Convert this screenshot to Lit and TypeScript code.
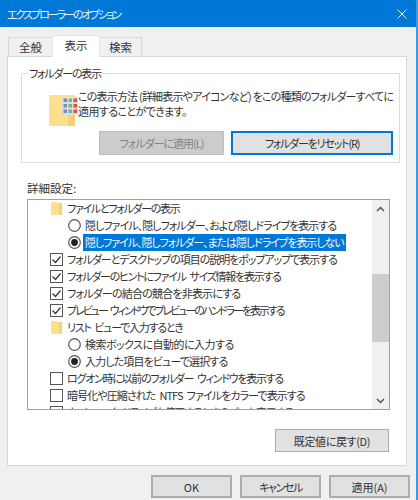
import { LitElement, html, css, svg } from "lit";
import { customElement } from "lit/decorators.js";

type Row = { kind: "folder" | "radio" | "check"; on?: boolean; sel?: boolean; text: string; ls: number };
const rows: Row[] = [
  { kind: "folder", ls: -1.3, text: "ファイルとフォルダーの表示" },
  { kind: "radio", ls: -0.96, text: "隠しファイル、隠しフォルダー、および隠しドライブを表示する" },
  { kind: "radio", ls: -1.07, on: true, sel: true, text: "隠しファイル、隠しフォルダー、または隠しドライブを表示しない" },
  { kind: "check", ls: -1.06, on: true, text: "フォルダーとデスクトップの項目の説明をポップアップで表示する" },
  { kind: "check", ls: -1.26, on: true, text: "フォルダーのヒントにファイル サイズ情報を表示する" },
  { kind: "check", ls: -0.8, on: true, text: "フォルダーの結合の競合を非表示にする" },
  { kind: "check", ls: -2.05, on: true, text: "プレビュー ウィンドウでプレビューのハンドラーを表示する" },
  { kind: "folder", ls: -1.25, text: "リスト ビューで入力するとき" },
  { kind: "radio", ls: -0.53, text: "検索ボックスに自動的に入力する" },
  { kind: "radio", ls: -0.87, on: true, text: "入力した項目をビューで選択する" },
  { kind: "check", ls: -1.26, text: "ログオン時に以前のフォルダー ウィンドウを表示する" },
  { kind: "check", ls: -0.92, text: "暗号化や圧縮された NTFS ファイルをカラーで表示する" },
  { kind: "check", ls: -1.1, text: "ネットワーク ドライブを使用するときのパスを表示する" },
];

const cols = ["#6f8fb8", "#7fb27f", "#d0534a"];

@customElement("app-root")
export class AppRoot extends LitElement {
  static styles = css`
    :host {
      display: block;
      width: 418px;
      height: 500px;
      overflow: hidden;
      background: #fff;
      font-family: "Noto Sans CJK JP", "Noto Sans", sans-serif;
      font-size: 11.5px;
      font-feature-settings: "palt";
      color: #333;
    }
    .outer { display: flex; height: 500px; }
    .line { width: 2px; background: #3d9be6; flex: none; }
    .win { width: 416px; height: 500px; flex: none; background: #f0f0f0; display: flex; flex-direction: column; }
    .title {
      height: 27px; flex: none; background: #0078d7; color: #e8f3fc;
      display: flex; align-items: center; justify-content: space-between;
      padding: 0 9px 0 7px; font-size: 11px; letter-spacing: -2px;
    }
    .x { width: 10px; height: 10px; display: block; }
    .tabs { display: flex; height: 29px; flex: none; padding-left: 8px; box-sizing: border-box; align-items: flex-end; }
    .tab {
      height: 19px; box-sizing: border-box; border: 1px solid #d9d9d9; border-bottom: none; background: #f0f0f0;
      display: flex; align-items: center; justify-content: center;
    }
    .tab.a { width: 44px; border-right: none; }
    .tab.b { width: 48px; height: 22px; background: #fff; padding-bottom: 4px; margin-bottom: -1px; position: relative; z-index: 1; border-color: #e4e4e4; }
    .tab.c { width: 42px; border-left: none; }
    .page {
      margin-left: 7px; width: 400px; height: 410px; flex: none; box-sizing: border-box; background: #fff;
      border: 1px solid #d9d9d9; padding: 8px 6px 0 13px; display: flex; flex-direction: column;
    }
    fieldset {
      margin: 0; padding: 0; border: 1px solid #dcdcdc; height: 98px; box-sizing: border-box;
      width: 379px; flex: none; min-width: 0;
    }
    legend { padding: 0 1px; margin-left: 6px; line-height: 16px; height: 16px; font-size: 11px; letter-spacing: -1.2px; }
    .gi { display: flex; height: 42px; margin-top: 8px; }
    .gi svg { flex: none; margin: 6px 0 0 27px; }
    .msg { line-height: 15px; white-space: nowrap; font-size: 11px; display: flex; flex-direction: column; }
    .m1 { letter-spacing: -0.8px; }
    .m2 { letter-spacing: -0.6px; }
    .btns { display: flex; gap: 7px; padding-left: 77px; }
    button {
      font: inherit; font-feature-settings: inherit; color: #333; background: #e1e1e1; border: 1px solid #adadad;
      padding: 0; margin: 0; box-sizing: border-box; display: block;
    }
    .btns button { height: 24px; font-size: 11px; }
    .btns .dis { width: 125px; background: #ccc; border-color: #bfbfbf; color: #838383; letter-spacing: -1px; }
    .btns .foc { width: 162px; border: 2px solid #0078d7; letter-spacing: -1.2px; }
    .lab { margin-top: 17px; line-height: 16px; height: 16px; flex: none; padding-left: 6px; }
    .list {
      margin: 3px 0 0 6px; width: 363px; height: 211px; box-sizing: border-box; flex: none;
      border: 1px solid #a0a0a0; display: flex; overflow: hidden;
    }
    .rows { flex: 1; min-width: 0; overflow: hidden; font-size: 11px; word-spacing: 2.5px; }
    .row { height: 17px; display: flex; align-items: center; white-space: nowrap; line-height: 17px; }
    .ic { width: 15px; flex: none; display: flex; align-items: center; }
    .row.check { padding-left: 22px; }
    .row.folder { padding-left: 23px; }
    .row.folder .ic { width: 14px; }
    .row.radio { padding-left: 40px; }
    .t { padding: 0 2px; height: 17px; }
    .sel .t { background: #0078d7; color: #f2f8fd; }
    .sb { width: 17px; flex: none; background: #f0f0f0; display: flex; flex-direction: column; }
    .arrow { height: 17px; display: flex; align-items: center; justify-content: center; flex: none; }
    .gap { height: 57px; flex: none; }
    .thumb { height: 68px; flex: none; background: #cdcdcd; }
    .rest { flex: 1; }
    .reset { align-self: flex-end; margin: 19px 11px 0 0; width: 114px; height: 23px; font-size: 11px; letter-spacing: -0.35px; }
    .foot { flex: 1; display: flex; justify-content: flex-end; gap: 8px; padding: 9px 6px 3px 0; box-sizing: border-box; }
    .foot button { width: 81px; height: 23px; border-width: 2px; font-size: 11px; }
    .foot .cancel { letter-spacing: -1.4px; }
  `;

  private icon(r: Row) {
    if (r.kind === "folder")
      return html`<svg width="11" height="13" viewBox="0 0 11 13"><path d="M0 0h6v1h5v12H0z" fill="#fde08e"/><path d="M8 1h3v12H8z" fill="#f6cf78"/></svg>`;
    if (r.kind === "radio")
      return html`<svg width="13" height="13" viewBox="0 0 13 13"><circle cx="6.5" cy="6.5" r="5.8" fill="#fff" stroke="#555" stroke-width="1.2"/>${r.on ? svg`<circle cx="6.5" cy="6.5" r="3.4" fill="#222"/>` : ""}</svg>`;
    return html`<svg width="13" height="13" viewBox="0 0 13 13"><rect x=".5" y=".5" width="12" height="12" fill="#fff" stroke="#555"/>${r.on ? svg`<path d="M2.5 6.5l3 3 5-6" fill="none" stroke="#333" stroke-width="1.2"/>` : ""}</svg>`;
  }

  render() {
    const grid: unknown[] = [];
    for (let y = 0; y < 3; y++) for (let x = 0; x < 3; x++) {
      grid.push(svg`<rect x="${14.5 + x * 5}" y="${3.5 + y * 5.5}" width="3.5" height="3.5" fill="${cols[x]}"/>`);
    }
    return html`<div class="outer"><div class="win">
      <div class="title"><span>エクスプローラーのオプション</span>
        <svg class="x" viewBox="0 0 10 10"><path d="M.5.5l9 9M9.5.5l-9 9" stroke="#eaf4fc" stroke-width="1"/></svg></div>
      <div class="tabs">
        <div class="tab a">全般</div><div class="tab b">表示</div><div class="tab c">検索</div>
      </div>
      <div class="page">
        <fieldset>
          <legend>フォルダーの表示</legend>
          <div class="gi">
            <svg width="29" height="32" viewBox="0 0 29 32">
              <path d="M0 0h26v31H0z" fill="#fde08e"/><path d="M19 3h7v28h-7z" fill="#f6cf78"/>
              <rect x="13" y="2" width="16" height="18" fill="#dedede"/>${grid}
            </svg>
            <div class="msg"><span class="m1">この表示方法 (詳細表示やアイコンなど) をこの種類のフォルダーすべてに</span><span class="m2">適用することができます。</span></div>
          </div>
          <div class="btns"><button class="dis">フォルダーに適用(L)</button><button class="foc">フォルダーをリセット(R)</button></div>
        </fieldset>
        <div class="lab">詳細設定:</div>
        <div class="list">
          <div class="rows">
            ${rows.map(r => html`<div class="row ${r.kind} ${r.sel ? "sel" : ""}"><span class="ic">${this.icon(r)}</span><span class="t" style="letter-spacing:${r.ls}px">${r.text}</span></div>`)}
          </div>
          <div class="sb">
            <div class="arrow"><svg width="9" height="6" viewBox="0 0 9 6"><path d="M1 5l3.5-3.5L8 5" fill="none" stroke="#555" stroke-width="1.5"/></svg></div>
            <div class="gap"></div><div class="thumb"></div><div class="rest"></div>
            <div class="arrow"><svg width="9" height="6" viewBox="0 0 9 6"><path d="M1 1l3.5 3.5L8 1" fill="none" stroke="#555" stroke-width="1.5"/></svg></div>
          </div>
        </div>
        <button class="reset">既定値に戻す(D)</button>
      </div>
      <div class="foot"><button>OK</button><button class="cancel">キャンセル</button><button>適用(A)</button></div>
    </div><div class="line"></div></div>`;
  }
}
